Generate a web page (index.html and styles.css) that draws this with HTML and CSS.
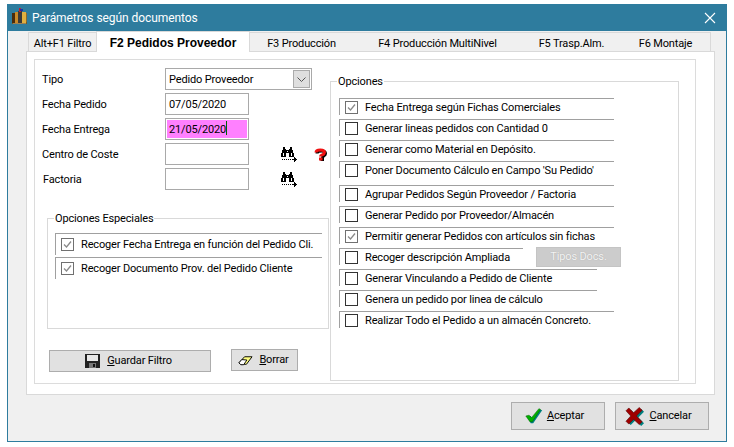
FILE: index.html
```html
<!DOCTYPE html>
<html lang="es">
<head>
<meta charset="utf-8">
<title>Parámetros según documentos</title>
<link rel="stylesheet" href="styles.css">
</head>
<body>
<div class="window">
  <header class="titlebar">
    <svg class="app-icon" width="17" height="17" viewBox="0 0 17 17" shape-rendering="crispEdges">
      <rect x="1" y="5" width="15" height="11" fill="#7a5a1e"/>
      <rect x="1" y="5" width="3" height="10" fill="#4a2c0c"/>
      <rect x="4" y="4" width="3" height="11" fill="#c98a2a"/>
      <rect x="7" y="3" width="4" height="12" fill="#3a3a3a"/>
      <rect x="11" y="4" width="4" height="11" fill="#e0b040"/>
      <rect x="15" y="5" width="1" height="9" fill="#8a6a30"/>
      <rect x="8" y="0" width="2" height="4" fill="#c02030"/>
      <rect x="9" y="1" width="3" height="2" fill="#2030a0"/>
      <rect x="2" y="15" width="13" height="1" fill="#a08050"/>
    </svg>
    <span class="title-text">Parámetros según documentos</span>
    <svg class="close-icon" width="12" height="12" viewBox="0 0 12 12"><path d="M1 1L11 11M11 1L1 11" stroke="#fff" stroke-width="1.1" fill="none"/></svg>
  </header>

  <nav class="tabs">
    <div class="tab tab-filtro">Alt+F1 Filtro</div>
    <div class="tab tab-active">F2 Pedidos Proveedor</div>
    <div class="tab tab-f3">F3 Producción</div>
    <div class="tab tab-f4">F4 Producción MultiNivel</div>
    <div class="tab tab-f5">F5 Trasp.Alm.</div>
    <div class="tab tab-f6">F6 Montaje</div>
  </nav>

  <section class="tab-panel">
    <div class="inner-panel">
      <div class="col-left">
        <div class="form">
          <label class="lbl">Tipo</label>
          <div class="select">
            <span class="select-text">Pedido Proveedor</span>
            <span class="select-btn"><svg width="9" height="5" viewBox="0 0 9 5"><path d="M0.5 0.5L4.5 4.5L8.5 0.5" stroke="#555" fill="none"/></svg></span>
          </div>

          <label class="lbl">Fecha Pedido</label>
          <div class="input">07/05/2020</div>

          <label class="lbl">Fecha Entrega</label>
          <div class="input input-focus"><span class="typed">21/05/2020</span></div>

          <label class="lbl">Centro de Coste</label>
          <div class="input"></div>
          <svg class="bino" width="16" height="15" viewBox="0 0 16 15" shape-rendering="crispEdges">
            <path d="M2 0h2v2h1v1h3V2h1V0h2v3h1v3h1v4H8V6H5v4H0V6h1V3h1z" fill="#000"/>
            <rect x="2" y="6" width="1" height="3" fill="#fff"/><rect x="10" y="6" width="1" height="3" fill="#fff"/>
            <rect x="6" y="4" width="1" height="1" fill="#fff"/>
            <path d="M1 12h1v1H1zM3 12h1v1H3zM5 12h1v1H5zM7 12h1v1H7zM9 12h1v1H9zM11 12h3v1h-3z" fill="#000"/>
            <path d="M13 10h1v1h1v1h1v1h-1v1h-1v1h-1z" fill="#000"/>
          </svg>
          <svg class="help" width="15" height="13" viewBox="0 0 15 13">
            <path d="M3 4.5C3 1 11.5 1 11.5 4.5C11.5 7 8.5 6.5 8.5 9" stroke="#000" stroke-width="3" fill="none" transform="translate(1 1)"/>
            <rect x="7.5" y="10" width="3.5" height="3" fill="#000"/>
            <path d="M3 4.5C3 1 11.5 1 11.5 4.5C11.5 7 7.5 6.5 7.5 8.5" stroke="#f01010" stroke-width="3" fill="none"/>
            <rect x="6" y="9.5" width="3.5" height="3" fill="#f01010"/>
          </svg>

          <label class="lbl lbl-indent">Factoria</label>
          <div class="input"></div>
          <svg class="bino" width="16" height="15" viewBox="0 0 16 15" shape-rendering="crispEdges">
            <path d="M2 0h2v2h1v1h3V2h1V0h2v3h1v3h1v4H8V6H5v4H0V6h1V3h1z" fill="#000"/>
            <rect x="2" y="6" width="1" height="3" fill="#fff"/><rect x="10" y="6" width="1" height="3" fill="#fff"/>
            <rect x="6" y="4" width="1" height="1" fill="#fff"/>
            <path d="M1 12h1v1H1zM3 12h1v1H3zM5 12h1v1H5zM7 12h1v1H7zM9 12h1v1H9zM11 12h3v1h-3z" fill="#000"/>
            <path d="M13 10h1v1h1v1h1v1h-1v1h-1v1h-1z" fill="#000"/>
          </svg>
        </div>

        <div class="group group-special">
          <div class="legend">Opciones Especiales</div>
          <div class="check check-wide">
            <span class="box box-on"><svg width="11" height="11" viewBox="0 0 11 11"><path d="M2 5.5L4.5 8L9 2.5" stroke="#8a8a8a" stroke-width="1.3" fill="none"/></svg></span>
            <span>Recoger Fecha Entrega en función del Pedido Cli.</span>
          </div>
          <div class="check check-wide">
            <span class="box box-on"><svg width="11" height="11" viewBox="0 0 11 11"><path d="M2 5.5L4.5 8L9 2.5" stroke="#8a8a8a" stroke-width="1.3" fill="none"/></svg></span>
            <span>Recoger Documento Prov. del Pedido Cliente</span>
          </div>
        </div>

        <div class="left-actions">
          <button class="btn btn-save">
            <svg width="15" height="14" viewBox="0 0 15 14" shape-rendering="crispEdges">
              <path d="M0 0h15v14H0z" fill="#222"/>
              <rect x="2" y="1" width="11" height="6" fill="#e8e8e8"/>
              <rect x="4" y="9" width="7" height="5" fill="#777"/>
              <rect x="8" y="10" width="2" height="3" fill="#111"/>
            </svg>
            <span><u>G</u>uardar Filtro</span>
          </button>
          <button class="btn btn-clear">
            <svg width="15" height="13" viewBox="0 0 16 13">
              <path d="M1 9L7 2.5H15L9 10.5H3z" fill="#ffff80" stroke="#000"/>
              <path d="M1 9L4 5.5L9.5 6L6 11H3z" fill="#fff" stroke="#000"/>
            </svg>
            <span><u>B</u>orrar</span>
          </button>
        </div>
      </div>

      <div class="group group-options">
        <div class="legend">Opciones</div>
        <div class="check">
          <span class="box box-on"><svg width="11" height="11" viewBox="0 0 11 11"><path d="M2 5.5L4.5 8L9 2.5" stroke="#8a8a8a" stroke-width="1.3" fill="none"/></svg></span>
          <span>Fecha Entrega según Fichas Comerciales</span>
        </div>
        <div class="check"><span class="box"></span><span>Generar lineas pedidos con Cantidad 0</span></div>
        <div class="check"><span class="box"></span><span>Generar como Material en Depósito.</span></div>
        <div class="check check-gap"><span class="box"></span><span>Poner Documento Cálculo en Campo 'Su Pedido'</span></div>
        <div class="check"><span class="box"></span><span>Agrupar Pedidos Según Proveedor / Factoria</span></div>
        <div class="check"><span class="box"></span><span>Generar Pedido por Proveedor/Almacén</span></div>
        <div class="check">
          <span class="box box-on"><svg width="11" height="11" viewBox="0 0 11 11"><path d="M2 5.5L4.5 8L9 2.5" stroke="#8a8a8a" stroke-width="1.3" fill="none"/></svg></span>
          <span>Permitir generar Pedidos con artículos sin fichas</span>
        </div>
        <div class="check-with-btn">
          <div class="check check-short"><span class="box"></span><span>Recoger descripción Ampliada</span></div>
          <button class="btn-disabled">Tipos Docs.</button>
        </div>
        <div class="check check-mid"><span class="box"></span><span>Generar Vinculando a Pedido de Cliente</span></div>
        <div class="check check-mid"><span class="box"></span><span>Genera un pedido por linea de cálculo</span></div>
        <div class="check"><span class="box"></span><span>Realizar Todo el Pedido a un almacén Concreto.</span></div>
      </div>
    </div>
  </section>

  <footer class="footer">
    <button class="btn btn-footer">
      <svg width="18" height="18" viewBox="0 0 22 20">
        <path d="M3 11L7 10L9 13L18 2L21 3L10 19H7z" fill="#008080"/>
        <path d="M1 10L5 9L8 12L17 1L19 2L9 17H6z" fill="#00b000" stroke="#006000" stroke-width=".6"/>
      </svg>
      <span><u>A</u>ceptar</span>
    </button>
    <button class="btn btn-footer">
      <svg width="20" height="19" viewBox="0 0 21 20">
        <path d="M3 5L6 3L11 8L17 2L20 5L14 11L20 17L17 20L11 14L6 19L3 16L8 11z" fill="#008080"/>
        <path d="M1 4L4 1L9 6L15 0.5L18 3.5L12 9.5L18 15.5L15 18.5L9 13L4 18L1 15L6 9.5z" fill="#a00000" stroke="#500" stroke-width=".6"/>
      </svg>
      <span><u>C</u>ancelar</span>
    </button>
  </footer>
</div>
</body>
</html>
```
FILE: styles.css
```css
* { box-sizing: border-box; }
html, body { margin: 0; padding: 0; background: #fff; }
body { font: 11px/14px Roboto, "Liberation Sans", sans-serif; letter-spacing: -0.15px; color: #000; }

.window {
  margin: 4px 0 0 7px;
  width: 720px;
  height: 438px;
  background: #f0f0f0;
  border: 1px solid #2e7c9e;
  display: flex;
  flex-direction: column;
}

.titlebar {
  height: 26px;
  flex: none;
  background: #2e7c9e;
  color: #fff;
  display: flex;
  align-items: center;
  padding: 0 10px 0 3px;
  font: 12px Roboto, sans-serif;
  letter-spacing: -0.07px;
}
.app-icon { margin: 0 4px 3px 0; flex: none; }
.title-text { flex: 1; }
.close-icon { flex: none; }

.tabs {
  flex: none;
  display: flex;
  align-items: flex-end;
  height: 20px;
  margin-left: 20px;
  position: relative;
  z-index: 1;
}
.tab {
  height: 19px;
  line-height: 22px;
  text-align: center;
  background: #f0f0f0;
  border-top: 1px solid #d9d9d9;
  white-space: nowrap;
}
.tab-filtro { width: 68px; border-left: 1px solid #d9d9d9; }
.tab-f3 { width: 103px; }
.tab-f4 { width: 169px; }
.tab-f5 { width: 99px; }
.tab-f6 { width: 90px; border-right: 1px solid #d9d9d9; }
.tab-active {
  width: 154px;
  height: 21px;
  margin-bottom: -1px;
  background: #fff;
  font: bold 12px/22px "Liberation Sans", sans-serif;
  letter-spacing: 0;
  border: 1px solid #d9d9d9;
  border-bottom: 0;
}

.tab-panel {
  flex: none;
  margin-left: 18px;
  width: 689px;
  height: 344px;
  background: #fff;
  border: 1px solid #d9d9d9;
  padding: 7px 18px 10px 7px;
}
.inner-panel {
  height: 100%;
  border: 1px solid #dcdcdc;
  display: flex;
}
.col-left { width: 295px; flex: none; }

.form {
  display: grid;
  grid-template-columns: 123px 84px 32px 32px 16px;
  grid-auto-rows: 22px;
  row-gap: 3px;
  padding: 8px 0 0 7px;
  align-items: center;
}
.lbl { grid-column: 1; padding-top: 2px; }
.lbl-indent { padding-left: 1px; }
.select {
  grid-column: 2 / span 3;
  width: 147px;
  height: 22px;
  border: 1px solid #a9a9a9;
  padding: 0 1px 0 3px;
  display: flex;
  align-items: center;
  justify-content: space-between;
}
.select-text { padding-top: 1px; }
.select-btn {
  width: 17px;
  height: 18px;
  background: #dfdfdf;
  border: 1px solid #ababab;
  display: flex;
  align-items: center;
  justify-content: center;
}
.input {
  grid-column: 2;
  height: 22px;
  border: 1px solid #a9a9a9;
  padding-left: 3px;
  line-height: 21px;
}
.input-focus {
  padding: 1px;
  line-height: 19px;
}
.typed {
  display: block;
  height: 18px;
  background: #ff80ff;
  padding-left: 2px;
}
.typed::after {
  content: "";
  display: inline-block;
  width: 1px;
  height: 14px;
  background: #006400;
  vertical-align: -2px;
}
.bino { grid-column: 4; }
.help { grid-column: 5; }

.group {
  border: 1px solid #d9d9d9;
  background: #fff;
}
.legend {
  display: table;
  height: 14px;
  margin-top: -7px;
  padding: 0 1px;
  background: #fff;
}
.group-special {
  width: 282px;
  height: 111px;
  margin: 28px 0 0 12px;
  padding: 0 7px;
}
.group-options {
  flex: none;
  width: 349px;
  height: 300px;
  margin-top: 21px;
  padding: 0 8px;
}
.group-options .legend { margin-left: -2px; margin-bottom: 9px; }
.group-special .legend { margin-left: -1px; margin-bottom: 7px; }

.check {
  width: 275px;
  height: 17px;
  margin-bottom: 4px;
  padding-left: 5px;
  border-top: 1px solid #a0a0a0;
  border-left: 1px solid #a0a0a0;
  display: flex;
  align-items: center;
  gap: 7px;
  white-space: nowrap;
}
.check > span:last-child { padding-top: 1px; }
.check-wide { width: 267px; height: 22px; margin-bottom: 2px; }
.check-wide > span:last-child { padding-top: 0; }
.check-gap { margin-bottom: 7px; }
.check-short { width: 184px; }
.check-mid { width: 258px; }
.check-with-btn {
  display: flex;
  gap: 13px;
  align-items: flex-start;
  height: 21px;
}
.box {
  width: 13px;
  height: 13px;
  flex: none;
  border: 1px solid #333;
  background: #fff;
  display: flex;
}
.box-on { border-color: #707070; }

.btn {
  font: inherit;
  letter-spacing: inherit;
  color: #000;
  background: #e1e1e1;
  border: 1px solid #adadad;
  padding: 0;
  display: flex;
  align-items: center;
  justify-content: center;
}
.btn-disabled {
  width: 85px;
  height: 20px;
  margin-top: -1px;
  font: inherit;
  letter-spacing: inherit;
  padding: 0;
  background: #cccccc;
  border: 1px solid #c4c4c4;
  color: #f4f4f4;
  text-shadow: 0 0 1px #a0a0a0;
}
.left-actions {
  display: flex;
  align-items: flex-start;
  gap: 20px;
  margin: 20px 0 0 14px;
}
.btn-save { width: 162px; height: 22px; margin-top: 1px; gap: 7px; padding-right: 3px; }
.btn-clear { width: 67px; height: 22px; gap: 6px; padding-right: 2px; }

.footer {
  flex: 1;
  display: flex;
  justify-content: flex-end;
  align-items: flex-start;
  gap: 10px;
  padding: 7px 17px 0 0;
}
.btn-footer { width: 94px; height: 28px; gap: 4px; padding-right: 7px; }
```
